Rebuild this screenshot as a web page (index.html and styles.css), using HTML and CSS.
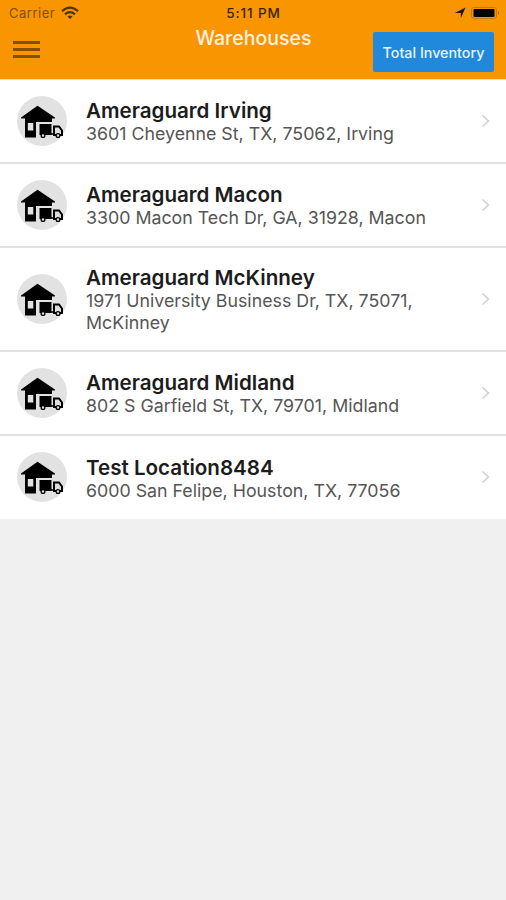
FILE: index.html
```
<!DOCTYPE html>
<html lang="en">
<head>
  <meta charset="UTF-8">
  <meta name="viewport" content="width=device-width, initial-scale=1.0">
  <title>Warehouses</title>
  <link rel="stylesheet" href="styles.css">
</head>
<body>
  <!-- Shared icons -->
  <svg class="sprite" width="0" height="0">
    <symbol id="warehouse" viewBox="0 0 50 50">
      <path d="M4 21.500 20.500 9.700 38 21.500v1H4z" fill="#000"/>
      <path fill-rule="evenodd" d="M8 22h27v4H19v15.500H8zM10.800 27v7.500h5.500V27z" fill="#000"/>
      <path d="M22.500 28h12v11h-12z" fill="#000"/>
      <path d="M37 30.500h5l3 4v4.500h-8z" fill="#ddd" stroke="#000" stroke-width="2"/>
      <circle cx="26" cy="39.500" r="1.900" fill="#ddd" stroke="#000" stroke-width="1.300"/>
      <circle cx="41" cy="39.500" r="1.900" fill="#ddd" stroke="#000" stroke-width="1.300"/>
      <path d="M33 38h4" stroke="#000" stroke-width="1.500"/>
    </symbol>
    <symbol id="chevron" viewBox="0 0 10 14">
      <path d="M1.500 1.500 7.500 7l-6 5.500" fill="none" stroke="#d0d0d4" stroke-width="1.600"/>
    </symbol>
  </svg>

  <header class="header">
    <div class="status-bar">
      <div class="carrier">
        <span>Carrier</span>
        <svg width="18" height="14" viewBox="0 0 18 14" fill="none" stroke="#523300" stroke-width="2.200">
          <path d="M1 5.200Q9-1.800 17 5.200"/>
          <path d="M4 8.300q5-4.200 10 0"/>
          <path d="M6.500 10.500q2.500-2 5 0L9 13z" fill="#523300" stroke="none"/>
        </svg>
      </div>
      <div class="time">5:11 PM</div>
      <div class="indicators">
        <svg width="12" height="12" viewBox="0 0 12 12">
          <path d="M11.500.5 6.800 11.300V6H.8z" fill="#241600"/>
        </svg>
        <svg width="29" height="12" viewBox="0 0 29 12">
          <rect x=".5" y=".5" width="25" height="11" rx="2.500" fill="none" stroke="#c87a00"/>
          <rect x="2.500" y="2" width="21" height="8" rx="1" fill="#000"/>
          <path d="M27 4q2 2 0 4z" fill="#a86600"/>
        </svg>
      </div>
    </div>
    <div class="nav-bar">
      <button class="menu" aria-label="Menu">
        <span></span>
        <span></span>
        <span></span>
      </button>
      <h1>Warehouses</h1>
      <button class="inventory">Total Inventory</button>
    </div>
  </header>

  <ul class="list">
    <li class="item">
      <div class="avatar"><svg><use href="#warehouse"/></svg></div>
      <div class="info">
        <h2>Ameraguard Irving</h2>
        <p>3601 Cheyenne St, TX, 75062, Irving</p>
      </div>
      <svg class="arrow"><use href="#chevron"/></svg>
    </li>
    <li class="item">
      <div class="avatar"><svg><use href="#warehouse"/></svg></div>
      <div class="info">
        <h2>Ameraguard Macon</h2>
        <p>3300 Macon Tech Dr, GA, 31928, Macon</p>
      </div>
      <svg class="arrow"><use href="#chevron"/></svg>
    </li>
    <li class="item">
      <div class="avatar"><svg><use href="#warehouse"/></svg></div>
      <div class="info">
        <h2>Ameraguard McKinney</h2>
        <p>1971 University Business Dr, TX, 75071, McKinney</p>
      </div>
      <svg class="arrow"><use href="#chevron"/></svg>
    </li>
    <li class="item">
      <div class="avatar"><svg><use href="#warehouse"/></svg></div>
      <div class="info">
        <h2>Ameraguard Midland</h2>
        <p>802 S Garfield St, TX, 79701, Midland</p>
      </div>
      <svg class="arrow"><use href="#chevron"/></svg>
    </li>
    <li class="item">
      <div class="avatar"><svg><use href="#warehouse"/></svg></div>
      <div class="info">
        <h2>Test Location8484</h2>
        <p>6000 San Felipe, Houston, TX, 77056</p>
      </div>
      <svg class="arrow"><use href="#chevron"/></svg>
    </li>
  </ul>
</body>
</html>
```
FILE: styles.css
```
* {
  box-sizing: border-box;
}
body {
  margin: 0;
  min-height: 100vh;
  background-color: #f0f0f0;
  font-family: Inter, "Liberation Sans", sans-serif;
}
.sprite {
  position: absolute;
}
/* Header */
.header {
  height: 80px;
  background-color: #f89500;
  border-bottom: 1px solid #fcdcc0;
}
.status-bar {
  display: grid;
  grid-template-columns: 1fr auto 1fr;
  align-items: center;
  height: 26px;
  padding: 0 6px 0 9px;
  font-size: 13px;
}
.carrier {
  display: flex;
  align-items: center;
  gap: 6px;
  color: #805000;
  letter-spacing: 0.5px;
}
.time {
  margin-right: 2px;
  color: #3a2400;
  font-size: 13.5px;
  font-weight: 500;
  letter-spacing: 0.9px;
}
.indicators {
  display: flex;
  justify-content: flex-end;
  align-items: center;
  gap: 5px;
}
.nav-bar {
  display: grid;
  grid-template-columns: 1fr auto 1fr;
  align-items: start;
  padding: 0 12px 0 13px;
}
.nav-bar h1 {
  margin: 0;
  color: #fff0e4;
  font-size: 19.5px;
  font-weight: 500;
  line-height: 24px;
}
.menu {
  display: flex;
  flex-direction: column;
  gap: 4px;
  width: 27px;
  margin-top: 15px;
  padding: 0;
  border: none;
  background: none;
}
.menu span {
  width: 100%;
  height: 3px;
  background-color: #845000;
}
.inventory {
  justify-self: end;
  width: 121px;
  height: 40px;
  margin-top: 6px;
  padding: 1px 0 0;
  border: none;
  border-radius: 2px;
  background-color: #2089dc;
  color: #e8f3ff;
  font-family: inherit;
  font-size: 14.3px;
  font-weight: 500;
  white-space: nowrap;
}
/* Warehouse list */
.list {
  margin: 0;
  padding: 0;
  list-style: none;
}
.item {
  display: flex;
  align-items: center;
  min-height: 84px;
  padding: 15px 15px 16px 17px;
  border-bottom: 2px solid #e2e2e2;
  background-color: #fff;
}
.item:last-child {
  min-height: 83px;
  border-bottom: none;
}
.avatar {
  width: 50px;
  height: 50px;
  border-radius: 50%;
  background-color: #e2e2e2;
}
.avatar svg {
  display: block;
  width: 50px;
  height: 50px;
}
.info {
  flex: 1;
  margin: 0 50px 0 19px;
  padding-top: 3px;
}
.info h2 {
  margin: 0;
  color: #1c1c1c;
  font-size: 20.6px;
  font-weight: 600;
  line-height: 24px;
}
.info p {
  margin: 0;
  color: #555;
  font-size: 17.8px;
  font-weight: 400;
  line-height: 22px;
}
.arrow {
  width: 10px;
  height: 14px;
}
```
